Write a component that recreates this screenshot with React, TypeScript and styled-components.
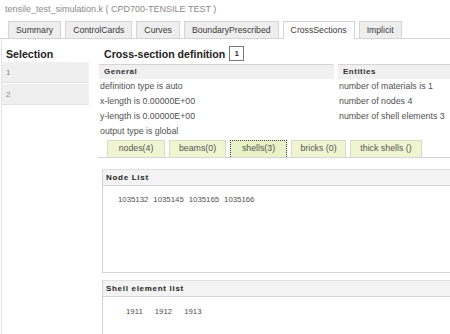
import styled, { createGlobalStyle } from "styled-components";

const GlobalStyle = createGlobalStyle`
  html, body {
    margin: 0;
    padding: 0;
    background: #fff;
    overflow: hidden;
  }
  body {
    font-family: "Liberation Sans", Arial, sans-serif;
    color: #333;
  }
`;

const Page = styled.div`
  width: 450px;
  height: 334px;
  overflow: hidden;
`;

const Title = styled.div`
  height: 20px;
  line-height: 18px;
  padding-left: 5px;
  font-size: 9px;
  color: #8a8a8a;
  white-space: nowrap;
`;

const TabBar = styled.div`
  display: flex;
  gap: 4px;
  margin-top: 1px;
  padding-left: 8px;
  border-bottom: 1px solid #d4d4d4;
`;

const Tab = styled.div<{ $active?: boolean }>`
  height: 16px;
  line-height: 16px;
  padding: 0 7px;
  font-size: 8.7px;
  color: #3a3a3a;
  white-space: nowrap;
  border: 1px solid #d4d4d4;
  border-bottom: none;
  background: ${(p) => (p.$active ? "#fff" : "#eeeeee")};
  margin-bottom: ${(p) => (p.$active ? "-1px" : "0")};
  padding-bottom: ${(p) => (p.$active ? "1px" : "0")};
`;

const Body = styled.div`
  display: flex;
  align-items: flex-start;
`;

const Sidebar = styled.aside`
  width: 87px;
  margin-left: 1px;
  height: 300px;
  border-left: 1px solid #e2e2e2;
  flex-shrink: 0;
`;

const Heading = styled.div`
  padding-top: 7px;
  height: 16px;
  line-height: 16px;
  font-size: 10.6px;
  font-weight: bold;
  color: #222;
  white-space: nowrap;
`;

const SideHeading = styled(Heading)`
  padding-left: 4px;
`;

const SideItem = styled.div`
  height: 21px;
  line-height: 21px;
  margin-bottom: 1px;
  padding-left: 4px;
  font-size: 8px;
  color: #888;
  background: #efefef;
  border-bottom: 1px solid #e2e2e2;
  box-sizing: border-box;
`;

const Main = styled.main`
  flex: 1;
  margin-left: 10px;
  min-width: 0;
`;

const HeadingRow = styled.div`
  display: flex;
  align-items: flex-end;
  gap: 4px;
  padding-left: 5px;
`;

const IdBox = styled.div`
  width: 13px;
  height: 13px;
  line-height: 13px;
  margin-bottom: 1px;
  text-align: center;
  font-size: 8px;
  font-weight: bold;
  color: #333;
  border: 1px solid #777;
`;

const InfoGrid = styled.div`
  display: grid;
  grid-template-columns: 235px 1fr;
  column-gap: 4px;
  margin-top: 2px;
  margin-right: -10px;
`;

const ColHeader = styled.div`
  height: 14px;
  line-height: 14px;
  padding-left: 5px;
  font-size: 8px;
  font-weight: bold;
  letter-spacing: 0.5px;
  color: #333;
  background: #f0f0f0;
  border-top: 1px solid #d4d4d4;
`;

const InfoRow = styled.div`
  height: 15px;
  line-height: 15px;
  padding-left: 1px;
  font-size: 8.8px;
  color: #505050;
  white-space: nowrap;
`;

const SubTabBar = styled.div`
  display: flex;
  gap: 4px;
  margin-top: 1px;
  margin-left: -1px;
  padding-left: 9px;
  border-bottom: 1px solid #d4d4d4;
`;

const SubTab = styled.div<{ $active?: boolean; $w: number }>`
  width: ${(p) => p.$w}px;
  height: 17px;
  line-height: 15px;
  box-sizing: border-box;
  text-align: center;
  font-size: 8.8px;
  color: #555;
  white-space: nowrap;
  background: ${(p) => (p.$active ? "#e9f1c6" : "#eef5d0")};
  border: 1px ${(p) => (p.$active ? "dotted #444" : "solid #d8dcc4")};
  border-bottom: none;
`;

const Panel = styled.section<{ $h: number; $top: number }>`
  height: ${(p) => p.$h}px;
  margin-top: ${(p) => p.$top}px;
  margin-left: 3px;
  margin-right: -20px;
  box-sizing: border-box;
  border-left: 1px solid #d4d4d4;
  border-bottom: 1px solid #d4d4d4;
`;

const PanelHeader = styled.div`
  height: 15px;
  line-height: 15px;
  padding-left: 3px;
  font-size: 8px;
  font-weight: bold;
  letter-spacing: 0.7px;
  color: #222;
  background: #f3f3f3;
  border-top: 1px solid #e0e0e0;
  border-bottom: 1px solid #d4d4d4;
`;

const ValueList = styled.div<{ $pad: number; $gap: number; $top: number }>`
  display: flex;
  gap: ${(p) => p.$gap}px;
  padding-left: ${(p) => p.$pad}px;
  padding-top: ${(p) => p.$top}px;
  line-height: 10px;
  font-size: 7.8px;
  color: #505050;
`;

const tabs = ["Summary", "ControlCards", "Curves", "BoundaryPrescribed", "CrossSections", "Implicit"];

const subTabs = [
  { label: "nodes(4)", w: 58 },
  { label: "beams(0)", w: 57 },
  { label: "shells(3)", w: 57, active: true },
  { label: "bricks (0)", w: 55 },
  { label: "thick shells ()", w: 72 },
];

const general = [
  "definition type is auto",
  "x-length is 0.00000E+00",
  "y-length is 0.00000E+00",
  "output type is global",
];

const entities = ["number of materials is 1", "number of nodes 4", "number of shell elements 3"];

export default function App() {
  return (
    <Page>
      <GlobalStyle />
      <Title>tensile_test_simulation.k ( CPD700-TENSILE TEST )</Title>
      <TabBar>
        {tabs.map((t) => (
          <Tab key={t} $active={t === "CrossSections"}>
            {t}
          </Tab>
        ))}
      </TabBar>
      <Body>
        <Sidebar>
          <SideHeading>Selection</SideHeading>
          <SideItem>1</SideItem>
          <SideItem>2</SideItem>
        </Sidebar>
        <Main>
          <HeadingRow>
            <Heading>Cross-section definition</Heading>
            <IdBox>1</IdBox>
          </HeadingRow>
          <InfoGrid>
            <div>
              <ColHeader>General</ColHeader>
              {general.map((g) => (
                <InfoRow key={g}>{g}</InfoRow>
              ))}
            </div>
            <div>
              <ColHeader>Entities</ColHeader>
              {entities.map((e) => (
                <InfoRow key={e}>{e}</InfoRow>
              ))}
            </div>
          </InfoGrid>
          <SubTabBar>
            {subTabs.map((s) => (
              <SubTab key={s.label} $w={s.w} $active={s.active}>
                {s.label}
              </SubTab>
            ))}
          </SubTabBar>
          <Panel $h={104} $top={11}>
            <PanelHeader>Node List</PanelHeader>
            <ValueList $pad={15} $gap={5} $top={9}>
              <span>1035132</span>
              <span>1035145</span>
              <span>1035165</span>
              <span>1035166</span>
            </ValueList>
          </Panel>
          <Panel $h={70} $top={7}>
            <PanelHeader>Shell element list</PanelHeader>
            <ValueList $pad={23} $gap={12} $top={10}>
              <span>1911</span>
              <span>1912</span>
              <span>1913</span>
            </ValueList>
          </Panel>
        </Main>
      </Body>
    </Page>
  );
}
